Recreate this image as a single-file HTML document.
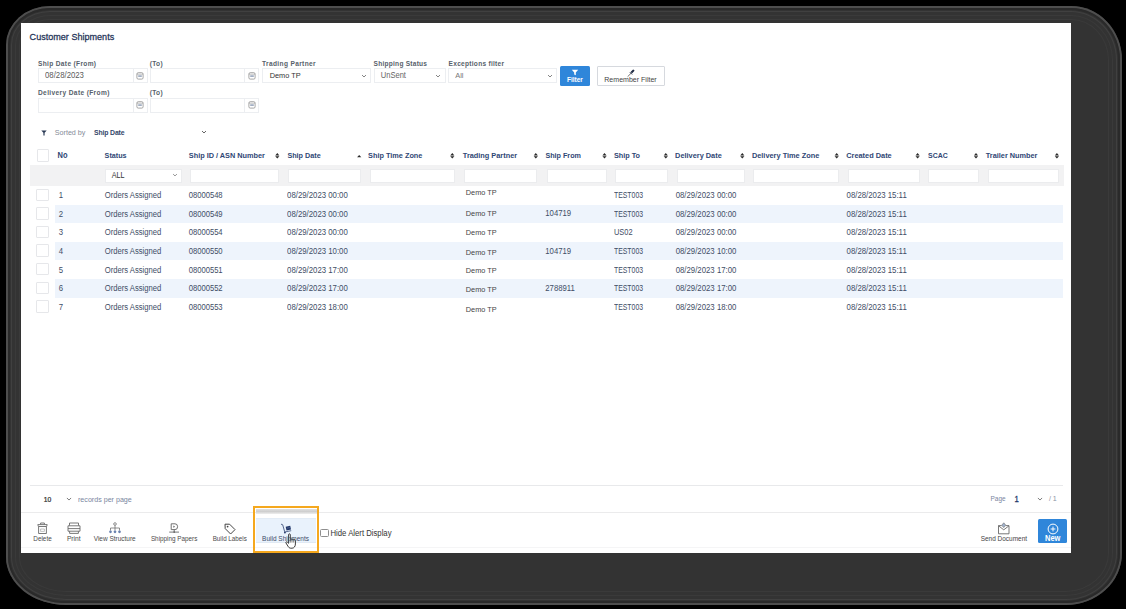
<!DOCTYPE html>
<html><head><meta charset="utf-8"><title>Customer Shipments</title>
<style>
html,body{margin:0;padding:0;background:#000;width:1126px;height:609px;overflow:hidden;position:relative}
.a{position:absolute}
.t{white-space:nowrap;line-height:12px;font-family:"Liberation Sans",sans-serif;transform:scaleY(1.1);transform-origin:0 50%}
body{font-family:"Liberation Sans",sans-serif}
</style></head><body>
<div class="a" style="left:6px;top:6px;width:1116px;height:599px;border-radius:44px 51px 56px 60px / 39px 54px 52px 48px;background:#333;box-shadow:inset 0 0 0 2px #4e4e4e"></div>
<div class="a" style="left:8px;top:8px;width:1112px;height:595px;border-radius:42px 49px 54px 58px / 37px 52px 50px 46px;box-shadow:inset 0 0 0 2px #2a2a2a"></div>
<div class="a" style="left:11px;top:11px;width:1106px;height:589px;border-radius:39px 46px 51px 55px / 34px 49px 47px 43px;box-shadow:inset 0 0 0 1px #404040"></div>
<div class="a" style="left:15px;top:15px;width:1098px;height:581px;border-radius:35px 42px 47px 51px / 30px 45px 43px 39px;box-shadow:inset 0 0 0 1px #3a3a3a"></div>
<div class="a" style="left:19px;top:19px;width:1090px;height:573px;border-radius:31px 38px 43px 47px / 26px 41px 39px 35px;box-shadow:inset 0 0 0 1px #3a3a3a"></div>
<div class="a" style="left:21px;top:23px;width:1050px;height:530px;background:#fff"></div>
<div class="a" style="left:38px;top:68.4px;width:110px;height:14.6px;border:1px solid #eceef1;box-sizing:border-box;background:#fff"></div>
<div class="a" style="left:132.8px;top:68.4px;width:1px;height:14.6px;background:#eceef1"></div>
<svg class="a" style="left:136.4px;top:71.7px" width="8" height="8" viewBox="0 0 8 8"><rect x="0.9" y="0.7" width="6.2" height="6.4" rx="1.3" fill="none" stroke="#8f8f8f" stroke-width="0.8"/><path d="M1 2.2 H7" stroke="#9a9a9a" stroke-width="0.6"/><rect x="2.2" y="3.3" width="3.6" height="1.6" fill="#98a6bc"/></svg>
<div class="a" style="left:149.7px;top:68.4px;width:109.8px;height:14.6px;border:1px solid #eceef1;box-sizing:border-box;background:#fff"></div>
<div class="a" style="left:244.3px;top:68.4px;width:1px;height:14.6px;background:#eceef1"></div>
<svg class="a" style="left:247.9px;top:71.7px" width="8" height="8" viewBox="0 0 8 8"><rect x="0.9" y="0.7" width="6.2" height="6.4" rx="1.3" fill="none" stroke="#8f8f8f" stroke-width="0.8"/><path d="M1 2.2 H7" stroke="#9a9a9a" stroke-width="0.6"/><rect x="2.2" y="3.3" width="3.6" height="1.6" fill="#98a6bc"/></svg>
<div class="a" style="left:38px;top:98px;width:110px;height:14.5px;border:1px solid #eceef1;box-sizing:border-box;background:#fff"></div>
<div class="a" style="left:132.8px;top:98px;width:1px;height:14.5px;background:#eceef1"></div>
<svg class="a" style="left:136.4px;top:101.25px" width="8" height="8" viewBox="0 0 8 8"><rect x="0.9" y="0.7" width="6.2" height="6.4" rx="1.3" fill="none" stroke="#8f8f8f" stroke-width="0.8"/><path d="M1 2.2 H7" stroke="#9a9a9a" stroke-width="0.6"/><rect x="2.2" y="3.3" width="3.6" height="1.6" fill="#98a6bc"/></svg>
<div class="a" style="left:149.7px;top:98px;width:109.8px;height:14.5px;border:1px solid #eceef1;box-sizing:border-box;background:#fff"></div>
<div class="a" style="left:244.3px;top:98px;width:1px;height:14.5px;background:#eceef1"></div>
<svg class="a" style="left:247.9px;top:101.25px" width="8" height="8" viewBox="0 0 8 8"><rect x="0.9" y="0.7" width="6.2" height="6.4" rx="1.3" fill="none" stroke="#8f8f8f" stroke-width="0.8"/><path d="M1 2.2 H7" stroke="#9a9a9a" stroke-width="0.6"/><rect x="2.2" y="3.3" width="3.6" height="1.6" fill="#98a6bc"/></svg>
<div class="a" style="left:261.7px;top:68.4px;width:109.6px;height:14.6px;border:1px solid #eceef1;box-sizing:border-box;background:#fff"></div>
<svg class="a" style="left:359.7px;top:72.2px" width="8" height="8" viewBox="0 0 8 8"><path d="M2 3 L4 5 L6 3" fill="none" stroke="#777" stroke-width="0.9"/></svg>
<div class="a" style="left:373.6px;top:68.4px;width:72px;height:14.6px;border:1px solid #eceef1;box-sizing:border-box;background:#fff"></div>
<svg class="a" style="left:434px;top:72.2px" width="8" height="8" viewBox="0 0 8 8"><path d="M2 3 L4 5 L6 3" fill="none" stroke="#777" stroke-width="0.9"/></svg>
<div class="a" style="left:448.2px;top:68.4px;width:109.1px;height:14.6px;border:1px solid #eceef1;box-sizing:border-box;background:#fff"></div>
<svg class="a" style="left:546px;top:72.2px" width="8" height="8" viewBox="0 0 8 8"><path d="M2 3 L4 5 L6 3" fill="none" stroke="#777" stroke-width="0.9"/></svg>
<div class="a" style="left:560px;top:66.2px;width:29.6px;height:19.4px;background:#2f86da;border-radius:1.5px"></div>
<svg class="a" style="left:570.8px;top:68.5px" width="8" height="7" viewBox="0 0 8 7"><path d="M0.8 0.8 H7.2 L4.8 3.4 V6.2 L3.2 5.4 V3.4 Z" fill="#fff"/></svg>
<div class="a" style="left:597px;top:66.2px;width:67.5px;height:19.4px;border:1px solid #d6d9de;box-sizing:border-box;background:#fff;border-radius:1px"></div>
<svg class="a" style="left:626px;top:69px" width="10" height="9" viewBox="0 0 10 9"><rect x="5.6" y="0.4" width="2.1" height="3.8" rx="0.6" transform="rotate(45 6.65 2.3)" fill="#1e2a44"/><path d="M3.9 3.2 L6.1 5.4" stroke="#1e2a44" stroke-width="1"/><path d="M5 4.3 L1.6 7.7" stroke="#333" stroke-width="0.7"/></svg>
<svg class="a" style="left:40.5px;top:130px" width="6" height="6" viewBox="0 0 6 6"><path d="M0.3 0.6 H5.7 L3.6 2.8 V5.6 L2.4 5.6 V2.8 Z" fill="#2a3a55"/></svg>
<svg class="a" style="left:199.5px;top:128.4px" width="8" height="8" viewBox="0 0 8 8"><path d="M2 3 L4 5 L6 3" fill="none" stroke="#555" stroke-width="0.9"/></svg>
<div class="a" style="left:36.5px;top:149.3px;width:12px;height:12.4px;border:1px solid #e6e7ea;box-sizing:border-box;border-radius:1px;background:#fff"></div>
<svg class="a" style="left:0;top:0;overflow:visible" width="1" height="1"><path d="M275.2 155.45 L277.3 153.1 L279.4 155.45 Z M275.2 156.15 L277.3 158.5 L279.4 156.15 Z" fill="#2a2a2a"/></svg>
<svg class="a" style="left:0;top:0;overflow:visible" width="1" height="1"><path d="M450.2 155.45 L452.3 153.1 L454.4 155.45 Z M450.2 156.15 L452.3 158.5 L454.4 156.15 Z" fill="#2a2a2a"/></svg>
<svg class="a" style="left:0;top:0;overflow:visible" width="1" height="1"><path d="M533.7 155.45 L535.8 153.1 L537.9 155.45 Z M533.7 156.15 L535.8 158.5 L537.9 156.15 Z" fill="#2a2a2a"/></svg>
<svg class="a" style="left:0;top:0;overflow:visible" width="1" height="1"><path d="M602.4 155.45 L604.5 153.1 L606.6 155.45 Z M602.4 156.15 L604.5 158.5 L606.6 156.15 Z" fill="#2a2a2a"/></svg>
<svg class="a" style="left:0;top:0;overflow:visible" width="1" height="1"><path d="M663.7 155.45 L665.8 153.1 L667.9 155.45 Z M663.7 156.15 L665.8 158.5 L667.9 156.15 Z" fill="#2a2a2a"/></svg>
<svg class="a" style="left:0;top:0;overflow:visible" width="1" height="1"><path d="M740.2 155.45 L742.3 153.1 L744.4 155.45 Z M740.2 156.15 L742.3 158.5 L744.4 156.15 Z" fill="#2a2a2a"/></svg>
<svg class="a" style="left:0;top:0;overflow:visible" width="1" height="1"><path d="M834.6 155.45 L836.7 153.1 L838.8 155.45 Z M834.6 156.15 L836.7 158.5 L838.8 156.15 Z" fill="#2a2a2a"/></svg>
<svg class="a" style="left:0;top:0;overflow:visible" width="1" height="1"><path d="M915.5 155.45 L917.6 153.1 L919.7 155.45 Z M915.5 156.15 L917.6 158.5 L919.7 156.15 Z" fill="#2a2a2a"/></svg>
<svg class="a" style="left:0;top:0;overflow:visible" width="1" height="1"><path d="M973.9 155.45 L976 153.1 L978.1 155.45 Z M973.9 156.15 L976 158.5 L978.1 156.15 Z" fill="#2a2a2a"/></svg>
<svg class="a" style="left:0;top:0;overflow:visible" width="1" height="1"><path d="M1054.8 155.45 L1056.9 153.1 L1059 155.45 Z M1054.8 156.15 L1056.9 158.5 L1059 156.15 Z" fill="#2a2a2a"/></svg>
<svg class="a" style="left:0;top:0;overflow:visible" width="1" height="1"><path d="M357.1 157.25 L359.2 154.9 L361.3 157.25 Z " fill="#2a2a2a"/></svg>
<div class="a" style="left:29.6px;top:165.2px;width:1034.2px;height:20.8px;background:#f2f2f3"></div>
<div class="a" style="left:105px;top:168.8px;width:76.8px;height:13.9px;border:1px solid #ebecee;box-sizing:border-box;background:#fff"></div>
<svg class="a" style="left:171px;top:170.8px" width="8" height="8" viewBox="0 0 8 8"><path d="M2.1 3.05 L4 4.95 L5.9 3.05" fill="none" stroke="#777" stroke-width="0.8"/></svg>
<div class="a" style="left:189.9px;top:168.6px;width:89.5px;height:14.1px;border:1px solid #ebecee;box-sizing:border-box;background:#fff"></div>
<div class="a" style="left:288.4px;top:168.6px;width:72.3px;height:14.1px;border:1px solid #ebecee;box-sizing:border-box;background:#fff"></div>
<div class="a" style="left:369.7px;top:168.6px;width:85.5px;height:14.1px;border:1px solid #ebecee;box-sizing:border-box;background:#fff"></div>
<div class="a" style="left:464.1px;top:168.6px;width:73px;height:14.1px;border:1px solid #ebecee;box-sizing:border-box;background:#fff"></div>
<div class="a" style="left:546.5px;top:168.6px;width:60.2px;height:14.1px;border:1px solid #ebecee;box-sizing:border-box;background:#fff"></div>
<div class="a" style="left:615.2px;top:168.6px;width:52.8px;height:14.1px;border:1px solid #ebecee;box-sizing:border-box;background:#fff"></div>
<div class="a" style="left:676.7px;top:168.6px;width:68.3px;height:14.1px;border:1px solid #ebecee;box-sizing:border-box;background:#fff"></div>
<div class="a" style="left:752.8px;top:168.6px;width:86px;height:14.1px;border:1px solid #ebecee;box-sizing:border-box;background:#fff"></div>
<div class="a" style="left:847.7px;top:168.6px;width:72.3px;height:14.1px;border:1px solid #ebecee;box-sizing:border-box;background:#fff"></div>
<div class="a" style="left:928.3px;top:168.6px;width:50.6px;height:14.1px;border:1px solid #ebecee;box-sizing:border-box;background:#fff"></div>
<div class="a" style="left:987.5px;top:168.6px;width:71.8px;height:14.1px;border:1px solid #ebecee;box-sizing:border-box;background:#fff"></div>
<div class="a" style="left:36.2px;top:188.6px;width:12.4px;height:12.4px;border:1px solid #e6e7ea;box-sizing:border-box;border-radius:1px;background:#fff"></div>
<div class="a" style="left:55px;top:204.6px;width:1008.4px;height:18.6px;background:#eef4fc"></div>
<div class="a" style="left:36.2px;top:207.2px;width:12.4px;height:12.4px;border:1px solid #e6e7ea;box-sizing:border-box;border-radius:1px;background:#fff"></div>
<div class="a" style="left:36.2px;top:225.8px;width:12.4px;height:12.4px;border:1px solid #e6e7ea;box-sizing:border-box;border-radius:1px;background:#fff"></div>
<div class="a" style="left:55px;top:241.8px;width:1008.4px;height:18.6px;background:#eef4fc"></div>
<div class="a" style="left:36.2px;top:244.4px;width:12.4px;height:12.4px;border:1px solid #e6e7ea;box-sizing:border-box;border-radius:1px;background:#fff"></div>
<div class="a" style="left:36.2px;top:263px;width:12.4px;height:12.4px;border:1px solid #e6e7ea;box-sizing:border-box;border-radius:1px;background:#fff"></div>
<div class="a" style="left:55px;top:279px;width:1008.4px;height:18.6px;background:#eef4fc"></div>
<div class="a" style="left:36.2px;top:281.6px;width:12.4px;height:12.4px;border:1px solid #e6e7ea;box-sizing:border-box;border-radius:1px;background:#fff"></div>
<div class="a" style="left:36.2px;top:300.2px;width:12.4px;height:12.4px;border:1px solid #e6e7ea;box-sizing:border-box;border-radius:1px;background:#fff"></div>
<div class="a" style="left:30px;top:484.6px;width:1033.4px;height:1px;background:#e8e9eb"></div>
<svg class="a" style="left:64.8px;top:494.6px" width="8" height="8" viewBox="0 0 8 8"><path d="M1.9 2.95 L4 5.05 L6.1 2.95" fill="none" stroke="#666" stroke-width="0.85"/></svg>
<svg class="a" style="left:1035.6px;top:494.5px" width="8" height="8" viewBox="0 0 8 8"><path d="M1.9 2.95 L4 5.05 L6.1 2.95" fill="none" stroke="#666" stroke-width="0.85"/></svg>
<div class="a" style="left:21px;top:511.5px;width:1050px;height:1px;background:#ebebec"></div>
<div class="a" style="left:21px;top:547.3px;width:1050px;height:1px;background:#f5f5f6"></div>
<div class="a" style="left:255.6px;top:509.3px;width:61.1px;height:5.2px;background:linear-gradient(#e0e0e0,#cfcfcf 50%,#eee)"></div>
<div class="a" style="left:255.8px;top:518.4px;width:60.4px;height:24.8px;background:#e9f2fc;box-shadow:inset 0 0.6px 0 #dde6f0, inset 0 -0.8px 0 #dde6f0"></div>
<div class="a" style="left:253.3px;top:506.3px;width:65.9px;height:46.4px;border:2.5px solid #f5a81e;box-sizing:border-box"></div>
<svg class="a" style="left:37px;top:522px" width="11" height="12" viewBox="0 0 11 12"><path d="M3.6 2.4 V1 H7.4 V2.4 M0.8 2.6 H10.2 L9.6 4.5 H1.4 Z M1.6 4.6 V11.5 H9.4 V4.6" fill="none" stroke="#6a6a6a" stroke-width="0.9"/><path d="M3.6 7 H7.4 V9.4 H3.6 Z" fill="none" stroke="#9a9a9a" stroke-width="0.6"/></svg>
<svg class="a" style="left:67px;top:522px" width="14" height="12" viewBox="0 0 14 12"><path d="M2.5 3.6 V1 H11.5 V3.6 M1 3.8 H13 V9.2 H1 Z M2.6 9.2 V11.4 H11.4 V9.2 M1 6.6 H13" fill="none" stroke="#6a6a6a" stroke-width="0.9"/></svg>
<svg class="a" style="left:108px;top:522px" width="14" height="12" viewBox="0 0 14 12"><circle cx="7" cy="2" r="1.3" fill="none" stroke="#6a6a6a" stroke-width="0.75"/><path d="M7 3.3 V6 M2.5 8.6 V6 H11.5 V8.6 M7 6 V8.6" fill="none" stroke="#6a6a6a" stroke-width="0.75"/><circle cx="2.5" cy="9.8" r="1.35" fill="#6a82b0"/><circle cx="7" cy="9.8" r="1.35" fill="#6a82b0"/><circle cx="11.5" cy="9.8" r="1.35" fill="#6a82b0"/></svg>
<svg class="a" style="left:168px;top:522px" width="12" height="12" viewBox="0 0 12 12"><path d="M3.2 1.8 H7 Q9.6 1.8 9.6 4.7 Q9.6 7.6 7 7.6 H3.2 Z M6.2 7.6 V10" fill="none" stroke="#6a6a6a" stroke-width="0.95"/><path d="M5.3 3.6 L7.2 4.7 L5.3 5.8 Z" fill="#6a6a6a"/><path d="M1.2 10.1 H11" stroke="#6a6a6a" stroke-width="0.9"/><circle cx="6.2" cy="10.1" r="0.9" fill="#6a6a6a"/></svg>
<svg class="a" style="left:224px;top:522.5px" width="12" height="12" viewBox="0 0 12 12"><path d="M1 1.2 H5.6 L11 6.6 L6.6 11 L1.2 5.6 Z" fill="none" stroke="#444" stroke-width="1"/><circle cx="3.6" cy="3.6" r="0.9" fill="#444"/></svg>
<svg class="a" style="left:280px;top:522.5px" width="12" height="11" viewBox="0 0 12 11"><path d="M1 1.4 Q2.3 0.9 2.7 1.8 L4.7 8.8" fill="none" stroke="#2b3f6e" stroke-width="0.8"/><path d="M5.7 3.7 L10.2 2.7 L11 6.6 L6.5 7.6 Z" fill="#23386a"/><path d="M7 5.2 L10.6 4.4" stroke="#6f82a8" stroke-width="0.5"/><circle cx="4.9" cy="9.5" r="0.95" fill="#2b3f6e"/><path d="M5.2 8.9 L11.2 7.7" stroke="#2b3f6e" stroke-width="0.75"/></svg>
<svg class="a" style="left:284.5px;top:532.5px" width="13" height="16" viewBox="0 0 13 16"><path d="M3.6 1.6 C3.6 0.6 5.3 0.6 5.3 1.6 V6.6 C5.3 5.8 7 5.8 7 6.8 C7 6 8.7 6 8.7 7.1 C8.7 6.4 10.4 6.4 10.4 7.5 V11 C10.4 13.4 9 15.2 7 15.2 H5.8 C4.4 15.2 3.7 14.4 2.9 13.1 L1 10 C0.5 9.1 1.5 8.4 2.3 9.1 L3.6 10.3 Z" fill="#fff" stroke="#1a1a1a" stroke-width="0.85"/><path d="M5.3 7 V9.6 M7 7.1 V9.6 M8.7 7.4 V9.6" stroke="#1a1a1a" stroke-width="0.55"/></svg>
<div class="a" style="left:320.2px;top:528.9px;width:8.4px;height:8px;border:1px solid #8e8e8e;box-sizing:border-box;border-radius:1.5px;background:#fff"></div>
<svg class="a" style="left:997px;top:522px" width="13" height="13" viewBox="0 0 13 13"><path d="M4.6 3.6 H1.5 V11.8 H12 V3.6 H8.9 M1.5 3.8 L6.75 7.8 L12 3.8" fill="none" stroke="#6a6a6a" stroke-width="0.9"/><path d="M6.75 0.8 L8.8 3.2 L6.75 5.6 L4.7 3.2 Z" fill="#9fb1cc" stroke="#6a6a6a" stroke-width="0.6"/></svg>
<div class="a" style="left:1038px;top:518.8px;width:28.9px;height:24.2px;background:#2f86da;border-radius:1.5px"></div>
<svg class="a" style="left:1046.6px;top:522.6px" width="12" height="12" viewBox="0 0 12 12"><circle cx="6" cy="6" r="4.9" fill="none" stroke="#fff" stroke-width="1"/><path d="M6 3.6 V8.4 M3.6 6 H8.4" stroke="#fff" stroke-width="0.95"/></svg>
<div class="a t" style="left:29.6px;top:30.6px;font-size:9.07px;font-weight:400;color:#1f3458;-webkit-text-stroke:0.25px #1f3458">Customer Shipments</div>
<div class="a t" style="left:38px;top:57.5px;font-size:6.6px;font-weight:700;color:#575f6b;letter-spacing:0.33px;transform:none">Ship Date (From)</div>
<div class="a t" style="left:149.7px;top:57.5px;font-size:6.6px;font-weight:700;color:#575f6b;letter-spacing:0.33px;transform:none">(To)</div>
<div class="a t" style="left:262px;top:57.5px;font-size:6.6px;font-weight:700;color:#575f6b;letter-spacing:0.35px;transform:none">Trading Partner</div>
<div class="a t" style="left:373.6px;top:57.5px;font-size:6.6px;font-weight:700;color:#575f6b;letter-spacing:0.23px;transform:none">Shipping Status</div>
<div class="a t" style="left:448.6px;top:57.5px;font-size:6.6px;font-weight:700;color:#575f6b;letter-spacing:0.26px;transform:none">Exceptions filter</div>
<div class="a t" style="left:38px;top:86.6px;font-size:6.6px;font-weight:700;color:#575f6b;letter-spacing:0.36px;transform:none">Delivery Date (From)</div>
<div class="a t" style="left:149.7px;top:86.6px;font-size:6.6px;font-weight:700;color:#575f6b;letter-spacing:0.33px;transform:none">(To)</div>
<div class="a t" style="left:45px;top:70.4px;font-size:7.79px;font-weight:400;color:#5a5a5a;">08/28/2023</div>
<div class="a t" style="left:269.7px;top:69.5px;font-size:7.36px;font-weight:400;color:#333;">Demo TP</div>
<div class="a t" style="left:380.8px;top:69.7px;font-size:7.56px;font-weight:400;color:#666;">UnSent</div>
<div class="a t" style="left:455.3px;top:69.7px;font-size:7.38px;font-weight:400;color:#777;">All</div>
<div class="a t" style="left:567px;top:73.6px;font-size:6.5px;font-weight:700;color:#fff;transform:scaleY(1.2)">Filter</div>
<div class="a t" style="left:604.3px;top:74.2px;font-size:7.04px;font-weight:400;color:#444;">Remember Filter</div>
<div class="a t" style="left:54.8px;top:127.1px;font-size:7.15px;font-weight:400;color:#858b98;">Sorted by</div>
<div class="a t" style="left:94px;top:127.3px;font-size:6.9px;font-weight:700;color:#34476a;letter-spacing:-0.15px;transform:none">Ship Date</div>
<div class="a t" style="left:57.5px;top:149.5px;font-size:7.5px;font-weight:700;color:#2f4775;">No</div>
<div class="a t" style="left:104.6px;top:149.5px;font-size:7.2px;font-weight:700;color:#2f4775;">Status</div>
<div class="a t" style="left:188.8px;top:149.5px;font-size:7.32px;font-weight:700;color:#2f4775;">Ship ID / ASN Number</div>
<div class="a t" style="left:287.4px;top:149.5px;font-size:7.22px;font-weight:700;color:#2f4775;">Ship Date</div>
<div class="a t" style="left:368.1px;top:149.5px;font-size:7.32px;font-weight:700;color:#2f4775;">Ship Time Zone</div>
<div class="a t" style="left:462.8px;top:149.5px;font-size:7.35px;font-weight:700;color:#2f4775;">Trading Partner</div>
<div class="a t" style="left:545.4px;top:149.5px;font-size:7.2px;font-weight:700;color:#2f4775;">Ship From</div>
<div class="a t" style="left:613.9px;top:149.5px;font-size:7.27px;font-weight:700;color:#2f4775;">Ship To</div>
<div class="a t" style="left:675.1px;top:149.5px;font-size:7.37px;font-weight:700;color:#2f4775;">Delivery Date</div>
<div class="a t" style="left:751.9px;top:149.5px;font-size:7.38px;font-weight:700;color:#2f4775;">Delivery Time Zone</div>
<div class="a t" style="left:846.2px;top:149.5px;font-size:7.38px;font-weight:700;color:#2f4775;">Created Date</div>
<div class="a t" style="left:928px;top:149.5px;font-size:6.95px;font-weight:700;color:#2f4775;">SCAC</div>
<div class="a t" style="left:985.8px;top:149.5px;font-size:7.32px;font-weight:700;color:#2f4775;">Trailer Number</div>
<div class="a t" style="left:111.7px;top:169.6px;font-size:7.19px;font-weight:400;color:#333;transform:scaleY(1.2)">ALL</div>
<div class="a t" style="left:58.8px;top:189.8px;font-size:7.75px;font-weight:400;color:#414d66;">1</div>
<div class="a t" style="left:104.8px;top:189.8px;font-size:7.65px;font-weight:400;color:#414d66;">Orders Assigned</div>
<div class="a t" style="left:188.7px;top:189.8px;font-size:7.64px;font-weight:400;color:#414d66;">08000548</div>
<div class="a t" style="left:287.1px;top:189.8px;font-size:7.81px;font-weight:400;color:#414d66;">08/29/2023 00:00</div>
<div class="a t" style="left:465.8px;top:187.1px;font-size:7.34px;font-weight:400;color:#444;">Demo TP</div>
<div class="a t" style="left:614px;top:189.8px;font-size:7.75px;font-weight:400;color:#414d66;transform:scale(0.887,1.1)">TEST003</div>
<div class="a t" style="left:675.7px;top:189.8px;font-size:7.8px;font-weight:400;color:#414d66;">08/29/2023 00:00</div>
<div class="a t" style="left:846.6px;top:189.8px;font-size:7.81px;font-weight:400;color:#414d66;">08/28/2023 15:11</div>
<div class="a t" style="left:58.8px;top:208.52px;font-size:7.75px;font-weight:400;color:#414d66;">2</div>
<div class="a t" style="left:104.8px;top:208.52px;font-size:7.65px;font-weight:400;color:#414d66;">Orders Assigned</div>
<div class="a t" style="left:188.7px;top:208.52px;font-size:7.64px;font-weight:400;color:#414d66;">08000549</div>
<div class="a t" style="left:287.1px;top:208.52px;font-size:7.81px;font-weight:400;color:#414d66;">08/29/2023 00:00</div>
<div class="a t" style="left:465.8px;top:207.72px;font-size:7.34px;font-weight:400;color:#444;">Demo TP</div>
<div class="a t" style="left:545.3px;top:208.22px;font-size:7.75px;font-weight:400;color:#414d66;">104719</div>
<div class="a t" style="left:614px;top:208.52px;font-size:7.75px;font-weight:400;color:#414d66;transform:scale(0.887,1.1)">TEST003</div>
<div class="a t" style="left:675.7px;top:208.52px;font-size:7.8px;font-weight:400;color:#414d66;">08/29/2023 00:00</div>
<div class="a t" style="left:846.6px;top:208.52px;font-size:7.81px;font-weight:400;color:#414d66;">08/28/2023 15:11</div>
<div class="a t" style="left:58.8px;top:227.24px;font-size:7.75px;font-weight:400;color:#414d66;">3</div>
<div class="a t" style="left:104.8px;top:227.24px;font-size:7.65px;font-weight:400;color:#414d66;">Orders Assigned</div>
<div class="a t" style="left:188.7px;top:227.24px;font-size:7.64px;font-weight:400;color:#414d66;">08000554</div>
<div class="a t" style="left:287.1px;top:227.24px;font-size:7.81px;font-weight:400;color:#414d66;">08/29/2023 00:00</div>
<div class="a t" style="left:465.8px;top:227.14px;font-size:7.34px;font-weight:400;color:#444;">Demo TP</div>
<div class="a t" style="left:614px;top:227.24px;font-size:7.75px;font-weight:400;color:#414d66;transform:scale(0.96,1.1)">US02</div>
<div class="a t" style="left:675.7px;top:227.24px;font-size:7.8px;font-weight:400;color:#414d66;">08/29/2023 00:00</div>
<div class="a t" style="left:846.6px;top:227.24px;font-size:7.81px;font-weight:400;color:#414d66;">08/28/2023 15:11</div>
<div class="a t" style="left:58.8px;top:245.96px;font-size:7.75px;font-weight:400;color:#414d66;">4</div>
<div class="a t" style="left:104.8px;top:245.96px;font-size:7.65px;font-weight:400;color:#414d66;">Orders Assigned</div>
<div class="a t" style="left:188.7px;top:245.96px;font-size:7.64px;font-weight:400;color:#414d66;">08000550</div>
<div class="a t" style="left:287.1px;top:245.96px;font-size:7.81px;font-weight:400;color:#414d66;">08/29/2023 10:00</div>
<div class="a t" style="left:465.8px;top:247.36px;font-size:7.34px;font-weight:400;color:#444;">Demo TP</div>
<div class="a t" style="left:545.3px;top:245.66px;font-size:7.75px;font-weight:400;color:#414d66;">104719</div>
<div class="a t" style="left:614px;top:245.96px;font-size:7.75px;font-weight:400;color:#414d66;transform:scale(0.887,1.1)">TEST003</div>
<div class="a t" style="left:675.7px;top:245.96px;font-size:7.8px;font-weight:400;color:#414d66;">08/29/2023 10:00</div>
<div class="a t" style="left:846.6px;top:245.96px;font-size:7.81px;font-weight:400;color:#414d66;">08/28/2023 15:11</div>
<div class="a t" style="left:58.8px;top:264.68px;font-size:7.75px;font-weight:400;color:#414d66;">5</div>
<div class="a t" style="left:104.8px;top:264.68px;font-size:7.65px;font-weight:400;color:#414d66;">Orders Assigned</div>
<div class="a t" style="left:188.7px;top:264.68px;font-size:7.64px;font-weight:400;color:#414d66;">08000551</div>
<div class="a t" style="left:287.1px;top:264.68px;font-size:7.81px;font-weight:400;color:#414d66;">08/29/2023 17:00</div>
<div class="a t" style="left:465.8px;top:264.88px;font-size:7.34px;font-weight:400;color:#444;">Demo TP</div>
<div class="a t" style="left:614px;top:264.68px;font-size:7.75px;font-weight:400;color:#414d66;transform:scale(0.887,1.1)">TEST003</div>
<div class="a t" style="left:675.7px;top:264.68px;font-size:7.8px;font-weight:400;color:#414d66;">08/29/2023 17:00</div>
<div class="a t" style="left:846.6px;top:264.68px;font-size:7.81px;font-weight:400;color:#414d66;">08/28/2023 15:11</div>
<div class="a t" style="left:58.8px;top:283.4px;font-size:7.75px;font-weight:400;color:#414d66;">6</div>
<div class="a t" style="left:104.8px;top:283.4px;font-size:7.65px;font-weight:400;color:#414d66;">Orders Assigned</div>
<div class="a t" style="left:188.7px;top:283.4px;font-size:7.64px;font-weight:400;color:#414d66;">08000552</div>
<div class="a t" style="left:287.1px;top:283.4px;font-size:7.81px;font-weight:400;color:#414d66;">08/29/2023 17:00</div>
<div class="a t" style="left:465.8px;top:284.4px;font-size:7.34px;font-weight:400;color:#444;">Demo TP</div>
<div class="a t" style="left:545.3px;top:283.1px;font-size:7.75px;font-weight:400;color:#414d66;">2788911</div>
<div class="a t" style="left:614px;top:283.4px;font-size:7.75px;font-weight:400;color:#414d66;transform:scale(0.887,1.1)">TEST003</div>
<div class="a t" style="left:675.7px;top:283.4px;font-size:7.8px;font-weight:400;color:#414d66;">08/29/2023 17:00</div>
<div class="a t" style="left:846.6px;top:283.4px;font-size:7.81px;font-weight:400;color:#414d66;">08/28/2023 15:11</div>
<div class="a t" style="left:58.8px;top:302.12px;font-size:7.75px;font-weight:400;color:#414d66;">7</div>
<div class="a t" style="left:104.8px;top:302.12px;font-size:7.65px;font-weight:400;color:#414d66;">Orders Assigned</div>
<div class="a t" style="left:188.7px;top:302.12px;font-size:7.64px;font-weight:400;color:#414d66;">08000553</div>
<div class="a t" style="left:287.1px;top:302.12px;font-size:7.81px;font-weight:400;color:#414d66;">08/29/2023 18:00</div>
<div class="a t" style="left:465.8px;top:303.72px;font-size:7.34px;font-weight:400;color:#444;">Demo TP</div>
<div class="a t" style="left:614px;top:302.12px;font-size:7.75px;font-weight:400;color:#414d66;transform:scale(0.887,1.1)">TEST003</div>
<div class="a t" style="left:675.7px;top:302.12px;font-size:7.8px;font-weight:400;color:#414d66;">08/29/2023 18:00</div>
<div class="a t" style="left:846.6px;top:302.12px;font-size:7.81px;font-weight:400;color:#414d66;">08/28/2023 15:11</div>
<div class="a t" style="left:43.7px;top:493.6px;font-size:6.74px;font-weight:400;color:#2a2a2a;transform:scaleY(1.2);-webkit-text-stroke:0.2px #2a2a2a">10</div>
<div class="a t" style="left:78px;top:493.5px;font-size:7.12px;font-weight:400;color:#7a86a0;">records per page</div>
<div class="a t" style="left:990.5px;top:493px;font-size:6.47px;font-weight:400;color:#7a86a0;">Page</div>
<div class="a t" style="left:1014.6px;top:494.1px;font-size:7.75px;font-weight:400;color:#22386a;-webkit-text-stroke:0.25px #22386a;transform:scaleY(1.1)">1</div>
<div class="a t" style="left:1048.9px;top:493px;font-size:7.02px;font-weight:400;color:#8a94a6;">/ 1</div>
<div class="a t" style="left:33.3px;top:532.8px;font-size:6.37px;font-weight:400;color:#4a4a4a;">Delete</div>
<div class="a t" style="left:66.9px;top:532.8px;font-size:6.66px;font-weight:400;color:#4a4a4a;">Print</div>
<div class="a t" style="left:93.7px;top:532.8px;font-size:6.48px;font-weight:400;color:#4a4a4a;">View Structure</div>
<div class="a t" style="left:150.9px;top:532.8px;font-size:6.34px;font-weight:400;color:#4a4a4a;">Shipping Papers</div>
<div class="a t" style="left:212.7px;top:532.8px;font-size:6.28px;font-weight:400;color:#4a4a4a;">Build Labels</div>
<div class="a t" style="left:262.1px;top:532.8px;font-size:6.49px;font-weight:400;color:#3c4a66;">Build Shipments</div>
<div class="a t" style="left:330.5px;top:527.8px;font-size:7.74px;font-weight:400;color:#333;">Hide Alert Display</div>
<div class="a t" style="left:980.7px;top:532.8px;font-size:6.47px;font-weight:400;color:#444;">Send Document</div>
<div class="a t" style="left:1045px;top:532.5px;font-size:7.49px;font-weight:700;color:#fff;">New</div>
</body></html>
